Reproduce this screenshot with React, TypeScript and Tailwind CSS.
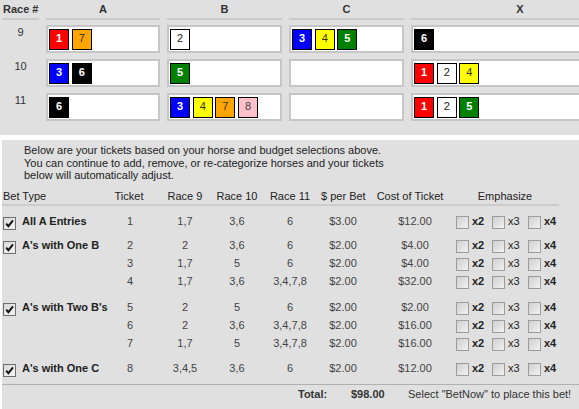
import React from 'react';

const HORSE: Record<number, string> = {
  1: 'bg-[#ff0000] text-white font-bold',
  2: 'bg-white text-[#222]',
  3: 'bg-[#0000ff] text-white font-bold',
  4: 'bg-[#ffff00] text-[#333]',
  5: 'bg-[#008000] text-white font-bold',
  6: 'bg-black text-white font-bold',
  7: 'bg-[#ffa500] text-[#333]',
  8: 'bg-[#ffc0cb] text-[#444]',
};

const board = [
  { race: 9, cells: [[1, 7], [2], [3, 4, 5], [6]] },
  { race: 10, cells: [[3, 6], [5], [], [1, 2, 4]] },
  { race: 11, cells: [[6], [3, 4, 7, 8], [], [1, 2, 5]] },
];

type Row = [number, string, string, string, string, string];

const groups: { label: string; gap: string; rows: Row[] }[] = [
  { label: 'All A Entries', gap: 'mt-[6px]', rows: [[1, '1,7', '3,6', '6', '$3.00', '$12.00']] },
  {
    label: "A's with One B",
    gap: 'mt-[6px]',
    rows: [
      [2, '2', '3,6', '6', '$2.00', '$4.00'],
      [3, '1,7', '5', '6', '$2.00', '$4.00'],
      [4, '1,7', '3,6', '3,4,7,8', '$2.00', '$32.00'],
    ],
  },
  {
    label: "A's with Two B's",
    gap: 'mt-[8px]',
    rows: [
      [5, '2', '5', '6', '$2.00', '$2.00'],
      [6, '2', '3,6', '3,4,7,8', '$2.00', '$16.00'],
      [7, '1,7', '5', '3,4,7,8', '$2.00', '$16.00'],
    ],
  },
  { label: "A's with One C", gap: 'mt-[7px]', rows: [[8, '3,4,5', '3,6', '6', '$2.00', '$12.00']] },
];

const topCols = 'grid grid-cols-[37px_114px_115px_115px_218px] gap-x-[7px]';

const Horse: React.FC<{ n: number }> = ({ n }) => (
  <span className={`block flex-none w-[20px] h-[21px] border border-black text-center text-[11px] leading-[17px] ${HORSE[n]}`}>
    {n}
  </span>
);

const Checked: React.FC = () => (
  <span className="block flex-none w-[13px] h-[13px] mt-[5px] ml-[1px] border border-[#6f6f6f] bg-linear-to-br from-[#d8d8d8] to-[#f4f4f4]">
    <svg viewBox="0 0 11 11" className="w-[11px] h-[11px]">
      <path d="M2.2 5.6 L4.4 8.2 L9 2.4" fill="none" stroke="#111" strokeWidth="1.9" />
    </svg>
  </span>
);

const Box: React.FC = () => (
  <span className="block flex-none w-[13px] h-[13px] mt-[4px] border border-[#9c9c9c] bg-linear-to-br from-[#cfcfcf] to-[#f2f2f2]" />
);

const App: React.FC = () => {
  return (
    <div className="w-[579px] h-[409px] overflow-hidden bg-white font-['Liberation_Sans',Arial,sans-serif] text-[11px] whitespace-nowrap">
      {/* race board */}
      <div className="bg-[#e0e0e0] h-[135px] pl-[2px] overflow-hidden">
        <div className={`${topCols} font-bold text-[#333]`}>
          {['Race #', 'A', 'B', 'C', 'X'].map((h) => (
            <div
              key={h}
              className={`h-[20px] pt-[1px] border-b-2 border-[#cacaca] leading-[17px] ${h === 'Race #' ? 'text-left pl-[1px]' : 'text-center'}`}
            >
              {h}
            </div>
          ))}
        </div>
        <div className="flex flex-col gap-[6px] mt-[5px]">
          {board.map((r) => (
            <div key={r.race} className={topCols}>
              <div className="text-center text-[#333] pt-[1px] leading-[13px]">{r.race}</div>
              {r.cells.map((c, i) => (
                <div key={i} className="h-[28px] bg-white border-2 border-[#c6c6c6] flex gap-[2.7px] pl-[1px] pt-[2px]">
                  {c.map((n) => (
                    <Horse key={n} n={n} />
                  ))}
                </div>
              ))}
            </div>
          ))}
        </div>
      </div>

      {/* tickets */}
      <div className="mt-[5px] ml-[2px] h-[269px] bg-[#e0e0e0] pt-[4px]">
        <p className="pl-[22px] leading-[12.5px] text-[#222]">
          Below are your tickets based on your horse and budget selections above.
          <br />
          You can continue to add, remove, or re-categorize horses and your tickets
          <br />
          below will automatically adjust.
        </p>

        <div className="mt-[6px] w-[557px] h-[18px] flex border-b-2 border-[#cccccc] leading-[16px] text-[#222]">
          <div className="w-[101px] pl-[1px]">Bet Type</div>
          <div className="w-[52px] text-center">Ticket</div>
          <div className="w-[60px] text-center">Race 9</div>
          <div className="w-[44px] text-center">Race 10</div>
          <div className="w-[62px] text-center">Race 11</div>
          <div className="w-[44px] text-center">$ per Bet</div>
          <div className="w-[90px] text-center">Cost of Ticket</div>
          <div className="w-[100px] text-center">Emphasize</div>
        </div>

        {groups.map((g) => (
          <div key={g.label} className={`flex ${g.gap}`}>
            <div className="w-[101px] flex items-start">
              <Checked />
              <span className="ml-[6px] leading-[18px] font-bold text-[#222]">{g.label}</span>
            </div>
            <div className="flex flex-col">
              {g.rows.map((r) => (
                <div key={r[0]} className="flex h-[18px] leading-[18px] text-[#444]">
                  <div className="w-[52px] text-center pl-[2px]">{r[0]}</div>
                  <div className="w-[60px] text-center">{r[1]}</div>
                  <div className="w-[44px] text-center">{r[2]}</div>
                  <div className="w-[62px] text-center">{r[3]}</div>
                  <div className="w-[44px] text-center">{r[4]}</div>
                  <div className="w-[90px] text-center pl-[10px]">{r[5]}</div>
                  <div className="w-[110px] flex pl-[1px]">
                    {['x2', 'x3', 'x4'].map((x) => (
                      <div key={x} className="w-[36px] flex items-start">
                        <Box />
                        <span className={`ml-[3px] text-[#222] ${x === 'x3' ? '' : 'font-bold'}`}>{x}</span>
                      </div>
                    ))}
                  </div>
                </div>
              ))}
            </div>
          </div>
        ))}

        <div className="mt-[7px] border-t border-[#b0b0b0] h-[18px] flex leading-[18px] text-[#333]">
          <span className="w-[296px]" />
          <span className="w-[53px] font-bold">Total:</span>
          <span className="w-[57px] font-bold">$98.00</span>
          <span>Select &quot;BetNow&quot; to place this bet!</span>
        </div>
      </div>
    </div>
  );
};

export default App;
